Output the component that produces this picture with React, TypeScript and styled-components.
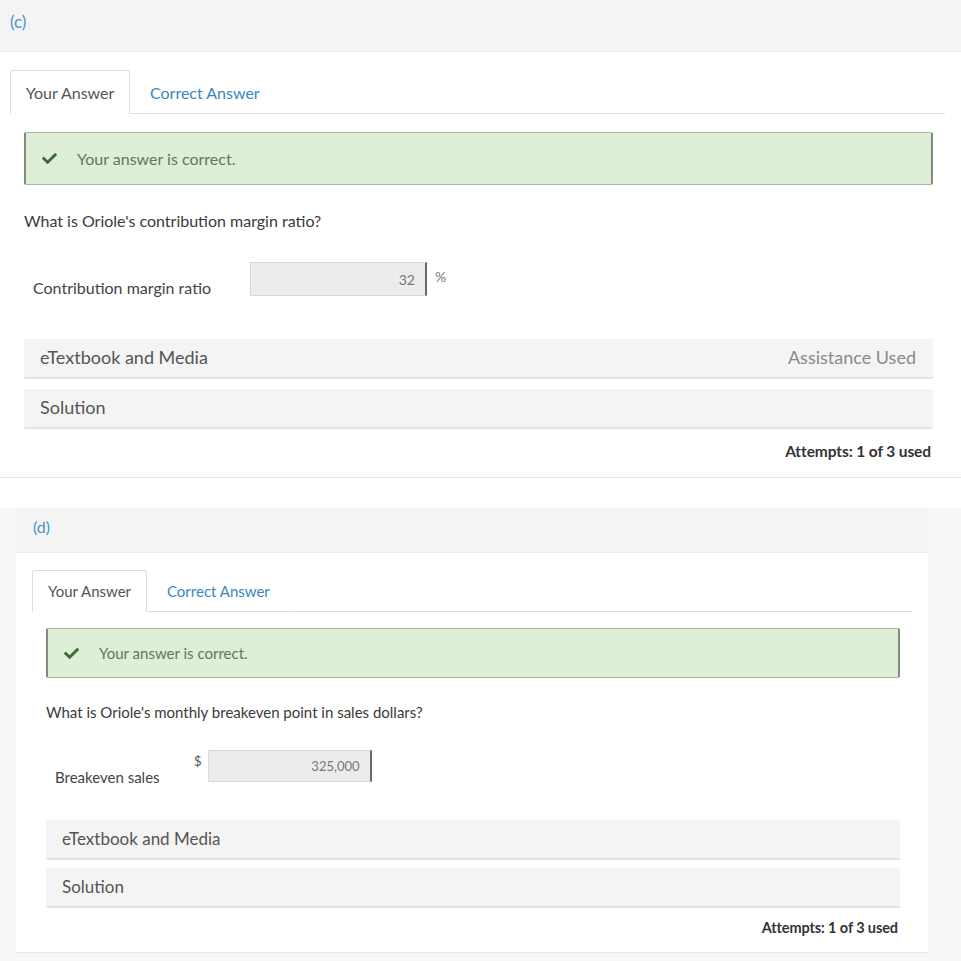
import React from 'react'
import styled, { createGlobalStyle } from 'styled-components'
import { FaCheck } from 'react-icons/fa'

const GlobalStyle = createGlobalStyle`
  html, body {
    margin: 0;
    padding: 0;
    background: #ffffff;
    font-family: Lato, 'Open Sans', Arial, sans-serif;
    color: #444;
  }
`

type Metrics = {
  headH: number
  headPad: number
  headFs: number
  bodyPadL: number
  tabsTop: number
  tabW: number
  tabH: number
  tabFs: number
  inset: number
  alertH: number
  alertTop: number
  fs: number
  rowFs: number
  rowH: number
  rowGap: number
  questionTop: number
}

const C_METRICS: Metrics = {
  headH: 52,
  headPad: 10,
  headFs: 17,
  bodyPadL: 10,
  tabsTop: 18,
  tabW: 120,
  tabH: 44,
  tabFs: 16,
  inset: 14,
  alertH: 53,
  alertTop: 18,
  fs: 16,
  rowFs: 18,
  rowH: 40,
  rowGap: 10,
  questionTop: 27,
}

const D_METRICS: Metrics = {
  headH: 45,
  headPad: 17,
  headFs: 16,
  bodyPadL: 16,
  tabsTop: 17,
  tabW: 115,
  tabH: 42,
  tabFs: 15,
  inset: 14,
  alertH: 50,
  alertTop: 16,
  fs: 15,
  rowFs: 17,
  rowH: 40,
  rowGap: 8,
  questionTop: 25,
}

const Page = styled.div`
  width: 961px;
  min-height: 961px;
  background: #ffffff;
`

const Shade = styled.div<{ $top: number }>`
  margin-top: ${p => p.$top}px;
  padding: 0 33px 8px 16px;
  background: #f7f7f7;
`

const Panel = styled.section<{ $bottom: number }>`
  background: #ffffff;
  padding-bottom: ${p => p.$bottom}px;
  border-bottom: 1px solid #e8e8e8;
`

const Head = styled.div<{ $h: number; $pad: number; $fs: number }>`
  height: ${p => p.$h}px;
  display: flex;
  align-items: center;
  padding-left: ${p => p.$pad}px;
  padding-bottom: 8px;
  box-sizing: border-box;
  background: #f4f4f4;
  border-bottom: 1px solid #ececec;
  color: #4b93c9;
  font-size: ${p => p.$fs}px;
`

const Body = styled.div<{ $pl: number }>`
  padding: 0 16px 0 ${p => p.$pl}px;
`

const Tabs = styled.div<{ $top: number }>`
  margin-top: ${p => p.$top}px;
  display: flex;
  align-items: flex-end;
  border-bottom: 1px solid #dddddd;
`

const Tab = styled.div<{ $active?: boolean; $w: number; $h: number; $fs: number }>`
  width: ${p => (p.$active ? `${p.$w}px` : 'auto')};
  height: ${p => p.$h}px;
  box-sizing: border-box;
  display: flex;
  align-items: center;
  justify-content: center;
  padding: 0 ${p => (p.$active ? 0 : 19)}px;
  margin-bottom: -1px;
  font-size: ${p => p.$fs}px;
  color: ${p => (p.$active ? '#555' : '#3a87c0')};
  background: #ffffff;
  border: 1px solid ${p => (p.$active ? '#dddddd' : 'transparent')};
  border-bottom-color: ${p => (p.$active ? '#ffffff' : '#dddddd')};
  border-radius: 3px 3px 0 0;
`

const Inner = styled.div<{ $inset: number }>`
  margin: 0 ${p => p.$inset - 2}px 0 ${p => p.$inset}px;
`

const Alert = styled.div<{ $h: number; $top: number; $fs: number }>`
  margin-top: ${p => p.$top}px;
  height: ${p => p.$h}px;
  box-sizing: border-box;
  display: flex;
  align-items: center;
  padding-left: 16px;
  gap: 20px;
  background: #dfeed7;
  border: 1px solid #a8b8a0;
  border-left: 2px solid #7f8d7a;
  border-right: 2px solid #7f8d7a;
  border-radius: 2px;
  color: #5d7a55;
  font-size: ${p => p.$fs}px;
  svg {
    color: #3e6a3a;
    font-size: 15px;
  }
`

const Question = styled.p<{ $fs: number; $top: number }>`
  margin: 0;
  padding: ${p => p.$top}px 0 0;
  font-size: ${p => p.$fs}px;
  color: #3a3a3a;
  line-height: 18px;
`

const Field = styled.div<{ $top: number; $bottom: number }>`
  display: flex;
  align-items: flex-start;
  padding: ${p => p.$top}px 0 0 9px;
  margin-bottom: ${p => p.$bottom}px;
`

const FieldLabel = styled.span<{ $w: number; $fs: number; $drop: number }>`
  width: ${p => p.$w}px;
  margin-top: ${p => p.$drop}px;
  font-size: ${p => p.$fs}px;
  line-height: 18px;
  color: #444;
`

const Prefix = styled.span<{ $fs: number }>`
  font-size: ${p => p.$fs - 2}px;
  color: #555;
  margin: 3px 6px 0 0;
`

const Box = styled.div<{ $w: number; $h: number; $fs: number }>`
  width: ${p => p.$w}px;
  height: ${p => p.$h}px;
  box-sizing: border-box;
  display: flex;
  align-items: center;
  justify-content: flex-end;
  padding-right: 10px;
  background: #ececec;
  border: 1px solid #d8d8d8;
  border-right: 2px solid #6a6a6a;
  font-size: ${p => p.$fs - 2}px;
  color: #777;
`

const Suffix = styled.span<{ $fs: number }>`
  margin: 6px 0 0 8px;
  font-size: ${p => p.$fs - 2}px;
  color: #777;
`

const Row = styled.div<{ $h: number; $fs: number; $gap: number }>`
  height: ${p => p.$h}px;
  box-sizing: border-box;
  display: flex;
  align-items: center;
  justify-content: space-between;
  padding: 0 17px 2px 16px;
  margin-bottom: ${p => p.$gap}px;
  background: #f4f4f4;
  border-bottom: 2px solid #e2e2e2;
  border-radius: 2px;
  font-size: ${p => p.$fs}px;
  color: #555;
`

const Used = styled.span`
  color: #8a8a8a;
`

const Attempts = styled.div<{ $fs: number; $top: number }>`
  text-align: right;
  padding: ${p => p.$top}px 2px 0 0;
  font-size: ${p => p.$fs}px;
  line-height: 18px;
  font-weight: 700;
  color: #333;
  letter-spacing: -0.1px;
`

type PartProps = {
  letter: string
  m: Metrics
  question: string
  label: string
  labelW: number
  value: string
  prefix?: string
  suffix?: string
  boxW: number
  boxH: number
  fieldTop: number
  fieldBottom: number
  labelDrop: number
  assistance?: boolean
  attemptsTop: number
  bottom: number
}

const Part = ({
  letter,
  m,
  question,
  label,
  labelW,
  value,
  prefix,
  suffix,
  boxW,
  boxH,
  fieldTop,
  fieldBottom,
  labelDrop,
  assistance,
  attemptsTop,
  bottom,
}: PartProps) => (
  <Panel $bottom={bottom}>
    <Head $h={m.headH} $pad={m.headPad} $fs={m.headFs}>
      {letter}
    </Head>
    <Body $pl={m.bodyPadL}>
      <Tabs $top={m.tabsTop}>
        <Tab $active $w={m.tabW} $h={m.tabH} $fs={m.tabFs}>
          Your Answer
        </Tab>
        <Tab $w={m.tabW} $h={m.tabH} $fs={m.tabFs}>
          Correct Answer
        </Tab>
      </Tabs>
      <Inner $inset={m.inset}>
        <Alert $h={m.alertH} $top={m.alertTop} $fs={m.fs}>
          <FaCheck />
          <span>Your answer is correct.</span>
        </Alert>
        <Question $fs={m.fs} $top={m.questionTop}>
          {question}
        </Question>
        <Field $top={fieldTop} $bottom={fieldBottom}>
          <FieldLabel $w={labelW} $fs={m.fs} $drop={labelDrop}>
            {label}
          </FieldLabel>
          {prefix && <Prefix $fs={m.fs}>{prefix}</Prefix>}
          <Box $w={boxW} $h={boxH} $fs={m.fs}>
            {value}
          </Box>
          {suffix && <Suffix $fs={m.fs}>{suffix}</Suffix>}
        </Field>
        <Row $h={m.rowH} $fs={m.rowFs} $gap={m.rowGap}>
          <span>eTextbook and Media</span>
          {assistance && <Used>Assistance Used</Used>}
        </Row>
        <Row $h={m.rowH} $fs={m.rowFs} $gap={m.rowGap}>
          <span>Solution</span>
        </Row>
        <Attempts $fs={m.fs - 0.5} $top={attemptsTop}>
          Attempts: 1 of 3 used
        </Attempts>
      </Inner>
    </Body>
  </Panel>
)

export default function App() {
  return (
    <Page>
      <GlobalStyle />
      <Part
        letter="(c)"
        m={C_METRICS}
        question="What is Oriole's contribution margin ratio?"
        label="Contribution margin ratio"
        labelW={217}
        value="32"
        suffix="%"
        boxW={177}
        boxH={34}
        fieldTop={32}
        fieldBottom={42}
        labelDrop={17}
        assistance
        attemptsTop={3}
        bottom={17}
      />
      <Shade $top={30}>
        <Part
          letter="(d)"
          m={D_METRICS}
          question="What is Oriole's monthly breakeven point in sales dollars?"
          label="Breakeven sales"
          labelW={139}
          value="325,000"
          prefix="$"
          boxW={164}
          boxH={32}
          fieldTop={29}
          fieldBottom={34}
          labelDrop={18}
          attemptsTop={3}
          bottom={15}
        />
      </Shade>
    </Page>
  )
}
